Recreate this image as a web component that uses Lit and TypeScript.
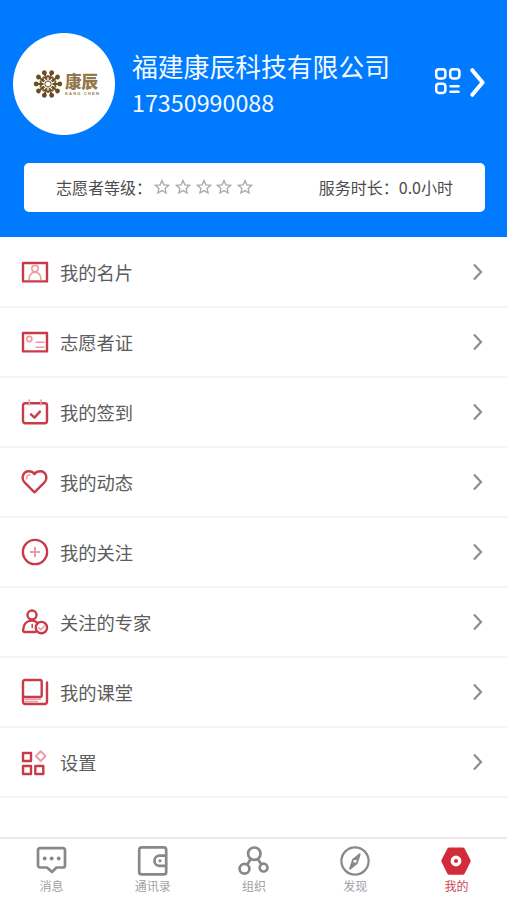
import { LitElement, html, svg, css } from "lit";
import { customElement, property } from "lit/decorators.js";

const menuIcons: Record<string, unknown> = {
  card: svg`
    <rect x="3" y="6" width="24" height="18.4"/>
    <g class="soft"><circle cx="15" cy="11.6" r="3.2"/><path d="M9 22.6c.3-5 2.3-7.4 6-7.4s5.7 2.4 6 7.4"/></g>`,
  badge: svg`
    <rect x="3" y="6" width="24" height="18.4"/>
    <g class="soft"><circle cx="9.3" cy="12" r="2.6"/><path d="M16 15.2h8M16 20.2h8"/></g>`,
  sign: svg`
    <rect x="3" y="6.3" width="24" height="20" rx="2.2"/>
    <path d="M11 17.3l3.5 3.3 5.4-6"/>
    <g class="soft"><path d="M9.3 3v5M21 3v5"/></g>`,
  heart: svg`
    <path d="M14.500 25.300L4.800 15.600C.5 11 3.300 4.300 8.700 4.300c2.600 0 4.600 1 5.800 2.700 1.200-1.700 3.200-2.700 5.800-2.700 5.400 0 8.200 6.700 3.900 11.300z"/>
    <g class="soft"><path d="M6.600 12c-.2-2.500.9-4 3.400-4.300"/></g>`,
  follow: svg`
    <circle cx="15" cy="15" r="12.1"/>
    <g class="soft strong"><path d="M15 10.700v8.600M10.700 15h8.600"/></g>`,
  expert: svg`
    <circle cx="12" cy="8" r="4.500"/>
    <path d="M15.500 25H5c-1.500 0-2-.8-1.900-2.200.4-5.500 3.600-9.200 8.700-9.200 2.500 0 4.400.9 5.800 2.300"/>
    <path d="M12.200 17.500v3" stroke-width="1.500"/>
    <circle cx="21.400" cy="20.600" r="5.700"/>
    <g class="soft"><path d="M18.600 20.700l2.200 2.100 3.600-3.800"/></g>`,
  course: svg`
    <rect x="3" y="3" width="18.700" height="17" rx="1.800"/>
    <path d="M3 18v6.500a2.500 2.500 0 0 0 2.500 2.500h19a2.500 2.500 0 0 0 2.500-2.500V5.500"/>
    <g class="soft"><path d="M5.500 22.300h15M5.500 24.600h12"/></g>`,
  settings: svg`
    <rect x="3" y="6" width="8" height="8"/><rect x="3" y="19" width="8" height="8"/><rect x="15.300" y="19" width="8" height="8"/>
    <g class="soft strong"><path d="M20.700 4.200l4.900 4.900-4.900 4.900-4.900-4.900z"/></g>`,
};

const tabIcons: Record<string, unknown> = {
  message: svg`
    <path d="M4 2.200h23a2 2 0 0 1 2 2V19.500a2 2 0 0 1-2 2h-6.500L16 26l-5-4.500H4a2 2 0 0 1-2-2V4.200a2 2 0 0 1 2-2z"/>
    <g class="dot"><circle cx="8.700" cy="12.500" r="1.900"/><circle cx="15.700" cy="12.500" r="1.900"/><circle cx="22.700" cy="12.500" r="1.900"/></g>`,
  contacts: svg`
    <rect x="2.200" y="1.400" width="27" height="27" rx="2.500"/>
    <path d="M29 9.700h-6.500a5.100 5.100 0 0 0 0 10.200H29"/>
    <g class="dot"><circle cx="23" cy="14.800" r="1.600"/></g>`,
  org: svg`
    <circle cx="16.300" cy="7.700" r="6.200"/><circle cx="6.500" cy="22.800" r="4.900"/><circle cx="25.600" cy="21.600" r="3.900"/>
    <path d="M12.700 13l-3.400 5.500M19.700 13l3.700 5.200"/>`,
  discover: svg`
    <circle cx="16" cy="15" r="13.600" stroke-width="2.200"/>
    <path d="M20.800 8.200l-3 9-6.800 5.500 3-9z" stroke-width="1.800"/>
    <g class="dot"><path d="M20.800 8.200l-3.100 6-3.700-.5zM11 22.700l3-6.600 3.800 1.100z"/></g>`,
  mine: svg`
    <g class="dot"><path d="M9.300 1.500h13.400q1.300 0 2 1.200l5.700 11q.6 1.200 0 2.400l-5.700 11.400q-.7 1.200-2 1.200H9.300q-1.300 0-2-1.200L1.600 16.100q-.6-1.200 0-2.400l5.700-11q.7-1.200 2-1.200z"/></g>
    <circle cx="16" cy="15" r="3.700" fill="none" stroke="#fff" stroke-width="3.400"/>`,
};

@customElement("menu-row")
class MenuRow extends LitElement {
  @property() icon = "";
  @property() label = "";

  static styles = css`
    :host {
      display: flex;
      align-items: center;
      box-sizing: border-box;
      height: 70px;
      padding: 0 20px;
      border-bottom: 2px solid #f3f3f3;
      color: #5c5c5c;
      font-size: 18.3px;
    }
    .icon {
      width: 30px;
      height: 30px;
      margin-right: 10px;
      fill: none;
      stroke: #c93b49;
      stroke-width: 2.4;
      stroke-linejoin: round;
      stroke-linecap: round;
    }
    .soft {
      stroke: #f09aa3;
      stroke-width: 1.6;
    }
    .strong {
      stroke-width: 2;
    }
    .label {
      flex: 1;
      line-height: 30px;
    }
    .chevron {
      width: 10px;
      height: 18px;
      margin-right: 4px;
      fill: none;
      stroke: #8d8d8d;
      stroke-width: 2.2;
    }
  `;

  render() {
    return html`
      <svg class="icon" viewBox="0 0 30 30">${menuIcons[this.icon]}</svg>
      <span class="label">${this.label}</span>
      <svg class="chevron" viewBox="0 0 10 18"><path d="M1 1.500l7 7.500-7 7.500"/></svg>
    `;
  }
}

@customElement("tab-item")
class TabItem extends LitElement {
  @property() icon = "";
  @property() label = "";

  static styles = css`
    :host {
      flex: 1;
      display: flex;
      flex-direction: column;
      align-items: center;
      color: #a0a2a4;
      --ink: #85898b;
    }
    :host([active]) {
      color: #c84450;
      --ink: #d12c39;
    }
    .icon {
      width: 32px;
      height: 30px;
      fill: none;
      stroke: var(--ink);
      stroke-width: 2.7;
      stroke-linejoin: round;
    }
    .dot {
      fill: var(--ink);
      stroke: none;
    }
    .label {
      font-size: 12px;
      line-height: 18px;
      margin-top: 1px;
    }
  `;

  render() {
    return html`
      <svg class="icon" viewBox="0 0 32 30">${tabIcons[this.icon]}</svg>
      <span class="label">${this.label}</span>
    `;
  }
}

@customElement("app-root")
class AppRoot extends LitElement {
  static styles = css`
    :host {
      display: flex;
      flex-direction: column;
      height: 900px;
      background: #fff;
      font-family: "Noto Sans CJK SC", sans-serif;
      overflow: hidden;
    }
    .header {
      box-sizing: border-box;
      height: 237px;
      margin-bottom: 1px;
      padding: 33px 22px 0 13px;
      background: #007aff;
    }
    .profile {
      display: flex;
      align-items: center;
      height: 102px;
      color: #f2f9ff;
    }
    .avatar {
      display: flex;
      align-items: center;
      box-sizing: border-box;
      width: 102px;
      height: 102px;
      padding-left: 20px;
      border-radius: 50%;
      background: #fff;
    }
    .flower {
      width: 30px;
      height: 30px;
      fill: #6d4d20;
      stroke: #6d4d20;
    }
    .brand {
      display: flex;
      flex-direction: column;
      margin-left: 2px;
      color: #92784c;
    }
    .brand-name {
      font-size: 16.5px;
      font-weight: 900;
      line-height: 17px;
      white-space: nowrap;
    }
    .brand-latin {
      font: bold 4px/5px "Liberation Sans", sans-serif;
      letter-spacing: 1.2px;
      white-space: nowrap;
      margin-top: 1px;
    }
    .identity {
      flex: 1;
      margin-left: 17px;
    }
    .name {
      font-size: 25.8px;
      line-height: 36px;
      white-space: nowrap;
    }
    .phone {
      font-size: 23.3px;
      line-height: 36px;
    }
    .qr {
      width: 52px;
      height: 32px;
      margin-bottom: 4px;
      fill: none;
      stroke: #fff;
      stroke-linecap: round;
      stroke-linejoin: round;
    }
    .level {
      display: flex;
      align-items: center;
      box-sizing: border-box;
      width: 461px;
      height: 49px;
      margin: 27.5px 0 0 11px;
      padding: 0 32px 0 32px;
      border-radius: 5px;
      background: #fff;
      color: #4c4c4c;
      font-size: 16px;
    }
    .stars {
      display: flex;
      flex: 1;
      gap: 4.8px;
      margin-left: 2px;
    }
    .star {
      width: 16px;
      height: 16px;
      fill: none;
      stroke: #aaa;
      stroke-width: 1.3;
    }
    .tabs {
      display: flex;
      box-sizing: border-box;
      height: 63px;
      margin-top: auto;
      padding: 7px 0 0 1px;
      border-top: 2px solid #e9e9e9;
    }
  `;

  private rows = [
    ["card", "我的名片"],
    ["badge", "志愿者证"],
    ["sign", "我的签到"],
    ["heart", "我的动态"],
    ["follow", "我的关注"],
    ["expert", "关注的专家"],
    ["course", "我的课堂"],
    ["settings", "设置"],
  ];

  private tabs = [
    ["message", "消息"],
    ["contacts", "通讯录"],
    ["org", "组织"],
    ["discover", "发现"],
    ["mine", "我的"],
  ];

  private petals = [0, 1, 2, 3, 4, 5, 6, 7, 8, 9];

  render() {
    return html`
      <div class="header">
        <div class="profile">
          <div class="avatar">
            <svg class="flower" viewBox="-15 -15 30 30">
              ${this.petals.map(
                (i) => svg`<g transform="rotate(${i * 36 + 18})">
                  <circle cx="0" cy="-11.8" r="2.4" stroke="none"/>
                  <path d="M0-11V-4.500" stroke-width="2"/>
                  <path d="M-2.500-8.300L0-5.500l2.500-2.800" fill="none" stroke-width="1.300"/>
                  <circle cx="0" cy="-3" r=".8" stroke="none"/>
                </g>`
              )}
            </svg>
            <div class="brand">
              <span class="brand-name">康辰</span>
              <span class="brand-latin">KANG CHEN</span>
            </div>
          </div>
          <div class="identity">
            <div class="name">福建康辰科技有限公司</div>
            <div class="phone">17350990088</div>
          </div>
          <svg class="qr" viewBox="0 0 52 32">
            <g stroke-width="2.5">
              <rect x="3.200" y="3.200" width="9.200" height="9.200" rx="2.800"/>
              <rect x="17.200" y="3.200" width="9.200" height="9.200" rx="2.800"/>
              <rect x="3.200" y="17.700" width="9.200" height="9.200" rx="2.800"/>
              <path d="M17.500 20.200h8M17.500 25.800h8"/>
            </g>
            <path d="M39.300 4.200l10.300 12.300-10.300 12.300" stroke-width="4"/>
          </svg>
        </div>
        <div class="level">
          <span>志愿者等级：</span>
          <div class="stars">
            ${[1, 2, 3, 4, 5].map(
              () => html`<svg class="star" viewBox="0 0 16 16">
                <path d="M8 1.500l1.900 4.300 4.700.5-3.500 3.100 1 4.600L8 11.600 3.900 14l1-4.600L1.400 6.300l4.700-.5z"/>
              </svg>`
            )}
          </div>
          <span>服务时长：0.0小时</span>
        </div>
      </div>
      ${this.rows.map(([icon, label]) => html`<menu-row icon=${icon} label=${label}></menu-row>`)}
      <div class="tabs">
        ${this.tabs.map(
          ([icon, label]) =>
            html`<tab-item icon=${icon} label=${label} ?active=${icon === "mine"}></tab-item>`
        )}
      </div>
    `;
  }
}
